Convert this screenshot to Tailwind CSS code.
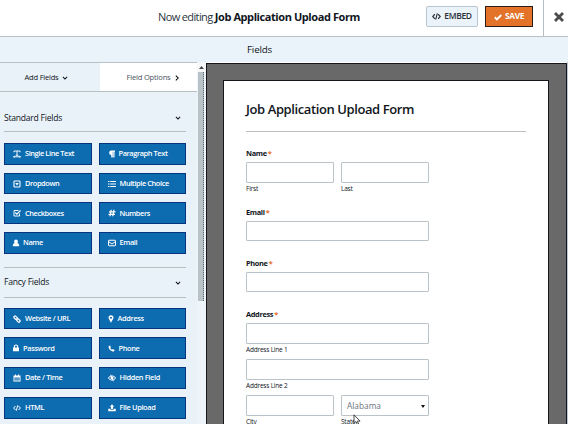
<!DOCTYPE html>
<html lang="en">
<head>
<meta charset="utf-8">
<title>Form builder</title>
<script src="https://cdn.jsdelivr.net/npm/@tailwindcss/browser@4"></script>
</head>
<body class="w-[568px] h-[424px] overflow-hidden bg-white font-['Open_Sans','Noto_Sans',sans-serif] text-[#10151c]">
<svg class="hidden">
  <symbol id="down" viewBox="0 0 10 10"><path d="M1.500 3l3.500 3.700L8.500 3" fill="none" stroke="currentColor" stroke-width="1.700"/></symbol>
  <symbol id="right" viewBox="0 0 10 10"><path d="M3 1l4 4-4 4" fill="none" stroke="currentColor" stroke-width="1.700"/></symbol>
  <symbol id="code" viewBox="0 0 16 16"><path d="M5 4L1.200 8 5 12M11 4l3.800 4-3.800 4M9.500 2.500l-3 11" fill="none" stroke="currentColor" stroke-width="2"/></symbol>
  <symbol id="check" viewBox="0 0 16 16"><path d="M1.500 8.500l4.300 4.300L14.500 4" fill="none" stroke="currentColor" stroke-width="3.800"/></symbol>
  <symbol id="text" viewBox="0 0 16 16"><path d="M2 4.500V2h12v2.500M8 2v8.500M5.500 10.500h5M1 13.500h14M3 11.500l-2 2 2 2M13 11.500l2 2-2 2" fill="none" stroke="currentColor" stroke-width="1.900"/></symbol>
  <symbol id="para" viewBox="0 0 16 16"><path d="M14 1H7a4.500 4.500 0 0 0-.5 9V15h3V3.500h1V15h2.500V3.500h1z" fill="currentColor"/></symbol>
  <symbol id="drop" viewBox="0 0 16 16"><rect x="2" y="2" width="12" height="12" rx="1.500" fill="none" stroke="currentColor" stroke-width="2.200"/><path d="M4.500 6h7L8 11z" fill="currentColor"/></symbol>
  <symbol id="list" viewBox="0 0 16 16"><path d="M0 3h3M4.500 3H16M0 8h3M4.500 8H16M0 13h3M4.500 13H16" fill="none" stroke="currentColor" stroke-width="2.300"/></symbol>
  <symbol id="box" viewBox="0 0 16 16"><path d="M13 9v5H2V3h9" fill="none" stroke="currentColor" stroke-width="1.900"/><path d="M4.500 7l3.200 3.200L15 3" fill="none" stroke="currentColor" stroke-width="2.400"/></symbol>
  <symbol id="hash" viewBox="0 0 16 16"><path d="M6.500 1.500l-2.500 13M12 1.500l-2.500 13M2 5.500h13M1 10.500h13" fill="none" stroke="currentColor" stroke-width="2.500"/></symbol>
  <symbol id="user" viewBox="0 0 16 16"><circle cx="8" cy="4.800" r="3.800" fill="currentColor"/><path d="M1.500 14.500c0-4 1.500-6 4-6.500h5c2.500.5 4 2.500 4 6.500z" fill="currentColor"/></symbol>
  <symbol id="mail" viewBox="0 0 16 16"><rect x="1" y="2.500" width="14" height="11" rx="1" fill="none" stroke="currentColor" stroke-width="2"/><path d="M1.500 5.500L8 10l6.500-4.500" fill="none" stroke="currentColor" stroke-width="2"/></symbol>
  <symbol id="link" viewBox="0 0 16 16"><g fill="none" stroke="currentColor" stroke-width="2.500"><rect x="-3.200" y="-2.300" width="7.500" height="4.600" rx="2.200" transform="translate(4.800 5) rotate(45)"/><rect x="-3.800" y="-2.300" width="7.500" height="4.600" rx="2.200" transform="translate(10.800 11) rotate(45)"/></g></symbol>
  <symbol id="pin" viewBox="0 0 16 16"><path fill-rule="evenodd" d="M8 .5a5 5 0 0 1 5 5C13 8 9.500 12 8 15.500 6.500 12 3 8 3 5.500a5 5 0 0 1 5-5zm0 3a2 2 0 1 0 0 4 2 2 0 0 0 0-4z" fill="currentColor"/></symbol>
  <symbol id="lock" viewBox="0 0 16 16"><rect x="2" y="7" width="12" height="7.500" rx="1" fill="currentColor"/><path d="M4.800 8V5.200a3.200 3.200 0 0 1 6.400 0V8" fill="none" stroke="currentColor" stroke-width="2.300"/></symbol>
  <symbol id="phone" viewBox="0 0 16 16"><path d="M4.500 1L1.300 2.800C1 9.500 7 15 13.300 14.800L15.200 11.500l-4-2.300-1.900 1.800C7.500 10.300 5.900 8.700 5 6.900l1.800-1.800z" fill="currentColor"/></symbol>
  <symbol id="cal" viewBox="0 0 16 16"><path fill-rule="evenodd" d="M1 3h3V.8h2V3h4V.8h2V3h3v12H1zm1.800 3.800v6.400h10.400V6.800z" fill="currentColor"/><path d="M5.500 7v6M8 7v6M10.500 7v6M3 10h10" stroke="currentColor" stroke-width=".6"/></symbol>
  <symbol id="eye" viewBox="0 0 16 16"><path d="M.8 8c3.500-5.500 10.900-5.500 14.400 0-3.500 5.500-10.900 5.500-14.400 0z" fill="none" stroke="currentColor" stroke-width="2"/><circle cx="8" cy="7.800" r="2.900" fill="currentColor"/><path d="M5 1.500l6 13" stroke="currentColor" stroke-width="1.600"/></symbol>
  <symbol id="upload" viewBox="0 0 16 16"><path d="M8 .5l4.500 5H10v4.500H6V5.500H3.500zM.5 9.500H5v2h6v-2h4.500v5H.5z" fill="currentColor"/></symbol>
</svg>

<header class="flex h-[37px] border-b border-[#b7c3c9]">
  <div class="flex-1 flex items-center pl-[158px] pb-[3px]">
    <h1 class="w-[268px] whitespace-nowrap pt-px text-[11px] tracking-[-0.420px]"><span class="tracking-[-0.620px] text-[#2c3540]">Now editing </span><b class="font-bold">Job Application Upload Form</b></h1>
    <button class="flex h-[21px] w-[52px] items-center justify-center gap-[3px] rounded-[2px] border border-[#b7c6d0] bg-[#ebf3fa] text-[8.500px] font-semibold tracking-[-0.350px] text-[#2a3038]"><svg class="size-[9px]"><use href="#code"/></svg>EMBED</button>
    <button class="ml-[7px] flex h-[21px] w-[48px] items-center justify-center gap-[3px] border border-[#2c1c18] bg-[#e27329] text-[8.300px] font-bold tracking-[-0.350px] text-white"><svg class="size-[8px]"><use href="#check"/></svg>SAVE</button>
  </div>
  <button class="flex w-[25px] items-center justify-center border-l border-[#b7bfc4] pb-[3px] pl-[6px]"><svg class="size-[10px] text-[#4c4c4c]" viewBox="0 0 10 10"><path d="M1 1l8 8M9 1L1 9" stroke="currentColor" stroke-width="2.800"/></svg></button>
</header>
<div class="flex h-[25px] items-center justify-center bg-[#ebf3fa] pr-[49px] pt-px text-[9.800px] font-medium tracking-[-0.200px]">Fields</div>

<main class="flex h-[362px]">
  <aside class="w-[197px] shrink-0 overflow-hidden border-t border-[#b7c3c9] bg-[#eaf2f9]">
    <nav class="flex h-[29px] border-b border-[#b7bfc3] text-[7.600px]">
      <div class="flex w-[100px] items-center justify-center gap-[4px] pr-[7px] pt-px font-medium tracking-[-0.250px]">Add Fields<svg class="size-[6px]"><use href="#down"/></svg></div>
      <div class="flex flex-1 items-center justify-center gap-[3px] bg-white pl-[9px] pt-px tracking-[-0.200px] text-[#4a545e]">Field Options<svg class="size-[6px] text-black"><use href="#right"/></svg></div>
    </nav>
    <section class="pl-[4px] pr-[11px]">
      <h2 class="flex h-[40px] items-center justify-between border-b border-[#b7bfc3] pr-[5px] pt-[13px] text-[8.600px] font-medium tracking-[-0.250px]">Standard Fields<svg class="mb-px size-[6px]"><use href="#down"/></svg></h2>
      <div class="grid grid-cols-2 gap-x-[7px] gap-y-[8px] pt-[11px] text-[7.400px] font-semibold tracking-[-0.400px] text-white">
        <div class="flex h-[21.700px] items-center gap-[4px] border border-[#06347f] bg-[#0d6bb0] pl-[8px]"><svg class="size-[8px]"><use href="#text"/></svg>Single Line Text</div>
        <div class="flex h-[21.700px] items-center gap-[3px] border border-[#06347f] bg-[#0d6bb0] pl-[8px]"><svg class="size-[8px]"><use href="#para"/></svg>Paragraph Text</div>
        <div class="flex h-[21.700px] items-center gap-[4px] border border-[#06347f] bg-[#0d6bb0] pl-[8px]"><svg class="size-[8px]"><use href="#drop"/></svg>Dropdown</div>
        <div class="flex h-[21.700px] items-center gap-[4px] border border-[#06347f] bg-[#0d6bb0] pl-[8px]"><svg class="size-[8px]"><use href="#list"/></svg>Multiple Choice</div>
        <div class="flex h-[21.700px] items-center gap-[4px] border border-[#06347f] bg-[#0d6bb0] pl-[8px]"><svg class="size-[8px]"><use href="#box"/></svg>Checkboxes</div>
        <div class="flex h-[21.700px] items-center gap-[4px] border border-[#06347f] bg-[#0d6bb0] pl-[8px]"><svg class="size-[8px]"><use href="#hash"/></svg>Numbers</div>
        <div class="flex h-[21.700px] items-center gap-[3px] border border-[#06347f] bg-[#0d6bb0] pl-[7px]"><svg class="size-[8px]"><use href="#user"/></svg>Name</div>
        <div class="flex h-[21.700px] items-center gap-[4px] border border-[#06347f] bg-[#0d6bb0] pl-[8px]"><svg class="size-[8px]"><use href="#mail"/></svg>Email</div>
      </div>
    </section>
    <section class="pl-[4px] pr-[11px] pt-[13px]">
      <h2 class="flex h-[31px] items-center justify-between border-y border-[#b7bfc3] pr-[5px] pt-px text-[8.600px] font-medium tracking-[-0.250px]">Fancy Fields<svg class="size-[6px]"><use href="#down"/></svg></h2>
      <div class="grid grid-cols-2 gap-x-[7px] gap-y-[8px] pt-[10px] text-[7.400px] font-semibold tracking-[-0.350px] text-white">
        <div class="flex h-[21.700px] items-center gap-[4px] border border-[#06347f] bg-[#0d6bb0] pl-[8px]"><svg class="size-[8px]"><use href="#link"/></svg>Website / URL</div>
        <div class="flex h-[21.700px] items-center gap-[3px] border border-[#06347f] bg-[#0d6bb0] pl-[7px]"><svg class="size-[8px]"><use href="#pin"/></svg>Address</div>
        <div class="flex h-[21.700px] items-center gap-[3px] border border-[#06347f] bg-[#0d6bb0] pl-[7px]"><svg class="size-[8px]"><use href="#lock"/></svg>Password</div>
        <div class="flex h-[21.700px] items-center gap-[4px] border border-[#06347f] bg-[#0d6bb0] pl-[8px]"><svg class="size-[7px]"><use href="#phone"/></svg>Phone</div>
        <div class="flex h-[21.700px] items-center gap-[4px] border border-[#06347f] bg-[#0d6bb0] pl-[8px]"><svg class="size-[8px]"><use href="#cal"/></svg>Date / Time</div>
        <div class="flex h-[21.700px] items-center gap-[4px] border border-[#06347f] bg-[#0d6bb0] pl-[8px]"><svg class="size-[8px]"><use href="#eye"/></svg>Hidden Field</div>
        <div class="flex h-[21.700px] items-center gap-[4px] border border-[#06347f] bg-[#0d6bb0] pl-[8px]"><svg class="size-[8px]"><use href="#code"/></svg>HTML</div>
        <div class="flex h-[21.700px] items-center gap-[4px] border border-[#06347f] bg-[#0d6bb0] pl-[8px]"><svg class="size-[8px]"><use href="#upload"/></svg>File Upload</div>
      </div>
    </section>
  </aside>
  <div class="w-[9px] shrink-0 bg-[#edf4fa] pt-px">
    <div class="flex h-[9px] items-center justify-center bg-[#f6f8fa]"><svg class="h-[3px] w-[5px]" viewBox="0 0 5 3"><path d="M0 3L2.500 0 5 3z" fill="#444"/></svg></div>
    <div class="ml-px h-[229px] w-[6px] border-r border-dotted border-[#59626a] bg-[#b9c2c6]"></div>
  </div>
  <div class="mt-px w-[361px] shrink-0 border-x border-t border-[#15151b] bg-[#696969] pl-[16px] pr-[17px] pt-[16px]">
    <form class="h-[345px] border border-b-0 border-[#15151b] bg-white pl-[22px] pr-[22px] text-[7.400px] leading-[10px]">
      <h2 class="h-[51px] border-b border-[#bcbfc1] pt-[18px] text-[13px] font-semibold leading-[20px] tracking-[-0.400px] whitespace-nowrap">Job Application Upload Form</h2>
      <div class="w-[183px]">
        <p class="mt-[16px] font-bold tracking-[-0.330px]">Name<span class="ml-px text-[#e8692a]">*</span></p>
        <div class="mt-[4px] grid grid-cols-2 gap-x-[7px] text-[6.500px] leading-[11px] tracking-[-0.200px]">
          <div><div class="h-[21px] rounded-[1px] border border-[#b9c3c8]"></div>First</div>
          <div><div class="h-[21px] rounded-[1px] border border-[#b9c3c8]"></div>Last</div>
        </div>
        <p class="mt-[13px] font-bold tracking-[-0.330px]">Email<span class="ml-px text-[#e8692a]">*</span></p>
        <div class="mt-[4px] h-[20px] rounded-[1px] border border-[#b9c3c8]"></div>
        <p class="mt-[17px] font-bold tracking-[-0.330px]">Phone<span class="ml-px text-[#e8692a]">*</span></p>
        <div class="mt-[4px] h-[20px] rounded-[1px] border border-[#b9c3c8]"></div>
        <p class="mt-[17px] font-bold tracking-[-0.330px]">Address<span class="ml-px text-[#e8692a]">*</span></p>
        <div class="mt-[4px] text-[6.500px] leading-[12px] tracking-[-0.200px]">
          <div class="h-[21px] rounded-[1px] border border-[#b9c3c8]"></div>Address Line 1
          <div class="mt-[3px] h-[21px] rounded-[1px] border border-[#b9c3c8]"></div>Address Line 2
          <div class="mt-[3px] grid grid-cols-2 gap-x-[7px]">
            <div><div class="h-[21px] rounded-[1px] border border-[#b9c3c8]"></div>City</div>
            <div><div class="flex h-[21px] items-center justify-between rounded-[1px] border border-[#b9c3c8] pl-[5px] pr-[3px] pt-px text-[8.300px] tracking-normal text-[#6b747b]">Alabama<svg class="h-[3px] w-[4px]" viewBox="0 0 4 3"><path d="M0 0h4L2 3z" fill="#111"/></svg></div>State</div>
          </div>
        </div>
      </div>
    </form>
  </div>
  <div class="w-px bg-[#b9c8d4]"></div>
</main>
<svg class="absolute left-[353px] top-[414px] h-[11px] w-[8px]" viewBox="0 0 8 11"><path d="M1 .8v8.400l2-1.700 1.300 3 1.300-.6-1.200-2.800h2.700z" fill="#fff" stroke="#333" stroke-width=".9"/></svg>
</body>
</html>
